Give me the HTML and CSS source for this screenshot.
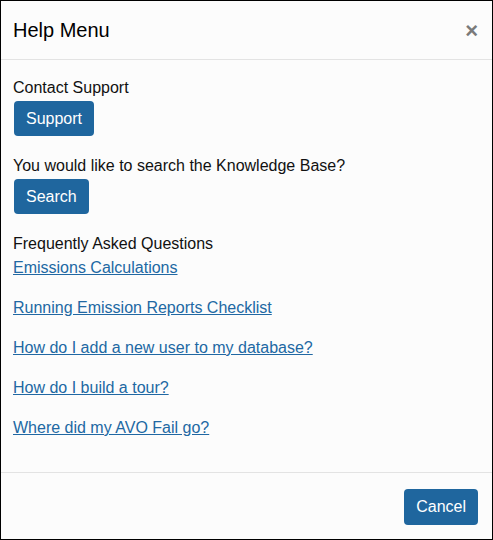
FILE: index.html
```html
<!DOCTYPE html>
<html>
<head>
<meta charset="utf-8">
<link rel="stylesheet" href="styles.css">
</head>
<body>
<div class="modal">
  <div class="modal-header">
    <h4 class="modal-title">Help Menu</h4>
    <span class="close">&times;</span>
  </div>
  <div class="modal-body">
    <div class="label">Contact Support</div>
    <button class="btn">Support</button>
    <div class="label second">You would like to search the Knowledge Base?</div>
    <button class="btn">Search</button>
    <div class="label second">Frequently Asked Questions</div>
    <ul class="links">
      <li><a href="#">Emissions Calculations</a></li>
      <li><a href="#">Running Emission Reports Checklist</a></li>
      <li><a href="#">How do I add a new user to my database?</a></li>
      <li><a href="#">How do I build a tour?</a></li>
      <li><a href="#">Where did my AVO Fail go?</a></li>
    </ul>
  </div>
  <div class="modal-footer">
    <button class="btn">Cancel</button>
  </div>
</div>
</body>
</html>
```
FILE: styles.css
```css
html, body {
  margin: 0;
  padding: 0;
  background: #fcfcfc;
}
.modal {
  box-sizing: border-box;
  width: 493px;
  height: 540px;
  border: 1px solid #000;
  background: #fcfcfc;
  font-family: "Liberation Sans", Arial, sans-serif;
  font-size: 16px;
  color: #111;
  display: flex;
  flex-direction: column;
}
.modal-header {
  height: 58px;
  border-bottom: 1px solid #e3e3e3;
  display: flex;
  align-items: center;
  justify-content: space-between;
  padding: 0 14px 0 12px;
}
.modal-title {
  margin: 0;
  font-size: 20px;
  font-weight: normal;
  line-height: 28px;
  color: #000;
}
.close {
  font-size: 22px;
  font-weight: bold;
  color: #7a7a7a;
  line-height: 1;
  margin-top: 1px;
}
.modal-body {
  flex: 1;
  padding: 16px 12px 0 12px;
}
.label {
  line-height: 24px;
}
.label.second {
  margin-top: 18px;
}
.btn {
  display: block;
  margin: 1px 0 0 1px;
  height: 35px;
  padding: 0 12px;
  border: none;
  border-radius: 4px;
  background: #1f669e;
  color: #fff;
  font-family: "Liberation Sans", Arial, sans-serif;
  font-size: 16px;
}
.links {
  list-style: none;
  margin: 0;
  padding: 0;
  display: flex;
  flex-direction: column;
  gap: 16px;
}
.links li {
  line-height: 24px;
}
.links a {
  color: #2168a3;
  text-decoration: underline;
}
.modal-footer {
  border-top: 1px solid #e3e3e3;
  height: 67px;
  display: flex;
  justify-content: flex-end;
  align-items: flex-start;
  padding: 16px 14px 0 0;
  box-sizing: border-box;
}
.modal-footer .btn {
  margin: 0;
  height: 36px;
  padding: 0 12px;
}
```
